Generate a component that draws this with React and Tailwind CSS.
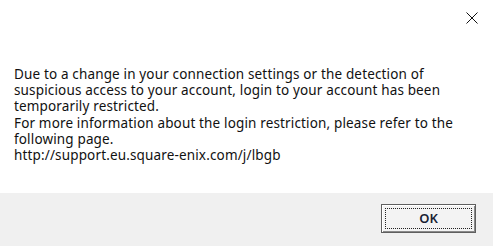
export default function App() {
  const lines = [
    'Due to a change in your connection settings or the detection of',
    'suspicious access to your account, login to your account has been',
    'temporarily restricted.',
    'For more information about the login restriction, please refer to the',
    'following page.',
    'http://support.eu.square-enix.com/j/lbgb',
  ]

  return (
    <div className="flex h-[246px] w-[493px] flex-col bg-white font-['Noto_Sans',sans-serif] text-black">
      <div className="flex h-[193px] flex-col">
        <div className="flex justify-end pr-[15px] pt-[12px]">
          <svg width="12" height="12" viewBox="0 0 12 12" className="block">
            <path d="M0.5 0.5 L11.5 11.5 M11.5 0.5 L0.5 11.5" stroke="#111" strokeWidth="1" fill="none" />
          </svg>
        </div>
        <div className="mt-[42px] pl-[14px] text-[13.5px] leading-[16.2px] tracking-[0.15px] text-[#111]">
          {lines.map((line) => (
            <div key={line} className="whitespace-nowrap">
              {line}
            </div>
          ))}
        </div>
      </div>
      <div className="flex flex-1 items-start justify-end bg-[#f0f0f0] pr-[17px] pt-[11px]">
        <button
          type="button"
          className="flex h-[29px] w-[95px] items-center justify-center border border-[#5f5f5f] bg-[#f3f3f3] p-[3px] shadow-[inset_1px_1px_0_#ffffff,inset_-1px_-1px_0_#8a8a8a]"
        >
          <span className="flex h-full w-full items-center justify-center border border-dotted border-[#222] text-[13px] font-semibold text-[#1a1f33]">
            OK
          </span>
        </button>
      </div>
    </div>
  )
}
